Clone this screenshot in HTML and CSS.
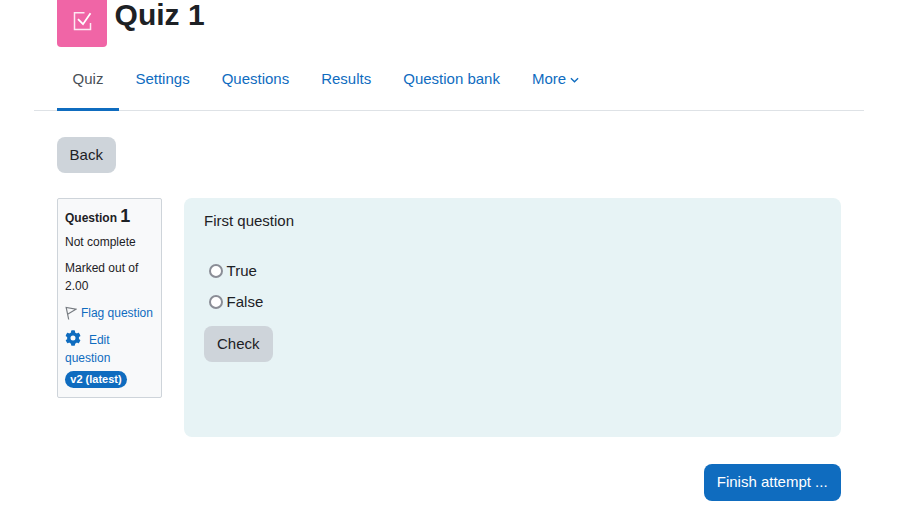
FILE: index.html
```html
<!DOCTYPE html>
<html lang="en">
  <head>
    <meta charset="UTF-8" />
    <title>Quiz 1</title>
    <link rel="stylesheet" href="styles.css" />
  </head>
  <body>
    <div class="page">
      <!-- HEADER -->
      <header class="page-header">
        <div class="activity-icon">
          <svg viewBox="0 0 24 24" width="24" height="24" fill="none" stroke="#fff">
            <path d="M14.500 2.800H4.500V19.500H20.500V13" stroke-width="1.500" opacity="0.85" />
            <path d="M8 9.200l5 5 7.500-11" stroke-width="1.800" />
          </svg>
        </div>
        <h1>Quiz 1</h1>
      </header>

      <!-- TABS -->
      <nav class="tabs">
        <a class="tab active" href="#">Quiz</a>
        <a class="tab" href="#">Settings</a>
        <a class="tab" href="#">Questions</a>
        <a class="tab" href="#">Results</a>
        <a class="tab" href="#">Question bank</a>
        <a class="tab" href="#">More
          <svg class="caret" viewBox="0 0 10 6" width="9" height="6" fill="none" stroke="#0f6cbf" stroke-width="1.5">
            <path d="M1 1l4 4 4-4" />
          </svg>
        </a>
      </nav>

      <main class="content">
        <button class="btn btn-secondary back">Back</button>

        <div class="question">
          <!-- QUESTION INFO -->
          <aside class="info">
            <h3 class="q-no">Question <span>1</span></h3>
            <p class="state">Not complete</p>
            <p class="grade">Marked out of 2.00</p>
            <a class="flag" href="#">
              <svg viewBox="0 0 12 14" width="12" height="14" fill="none" stroke="#767b80" stroke-width="1.2">
                <path d="M3.700 13.500L1.200 1.500 11 3.200 3 8" />
              </svg>
              Flag question
            </a>
            <a class="edit" href="#">
              <svg viewBox="0 0 512 512" width="16" height="16" fill="#0f6cbf">
                <path d="M487 316l-42-25c4-23 4-47 0-70l42-25c5-3 7-9 5-14-11-35-30-67-54-93-4-4-10-5-15-2l-42 24c-18-15-38-27-60-35V28c0-6-4-11-9-12-37-8-74-8-109 0-5 1-9 6-9 12v49c-22 8-42 20-60 35L92 88c-5-3-11-2-15 2-24 26-43 58-54 93-2 5 0 11 5 14l42 25c-4 23-4 47 0 70l-42 25c-5 3-7 9-5 14 11 35 30 67 54 93 4 4 10 5 15 2l42-24c18 15 38 27 60 35v49c0 6 4 11 9 12 37 8 74 8 109 0 5-1 9-6 9-12v-49c22-8 42-20 60-35l42 24c5 3 11 2 15-2 24-26 43-58 54-93 2-5 0-11-5-14zM256 336a80 80 0 1 1 0-160 80 80 0 0 1 0 160z" />
              </svg>
              <span class="edit-label">Edit question</span>
            </a>
            <span class="badge">v2 (latest)</span>
          </aside>

          <!-- QUESTION BODY -->
          <section class="formulation">
            <p class="q-text">First question</p>
            <label class="answer"><input type="radio" name="q1" /> True</label>
            <label class="answer"><input type="radio" name="q1" /> False</label>
            <button class="btn btn-secondary check">Check</button>
          </section>
        </div>

        <div class="actions">
          <button class="btn btn-primary">Finish attempt ...</button>
        </div>
      </main>
    </div>
  </body>
</html>
```

FILE: styles.css
```css
* {
  box-sizing: border-box;
}

:root {
  --blue: #0f6cbf;
  --dark: #1d2125;
}

html,
body {
  height: 100%;
  overflow: hidden;
}

body {
  margin: 0;
  color: var(--dark);
  background: #fff;
  font-family: "Liberation Sans", Arial, sans-serif;
  font-size: 15px;
  line-height: 22.5px;
}

a {
  color: var(--blue);
  text-decoration: none;
}

.page {
  margin: -3px 34.4px 0 33.6px;
}

/* HEADER */

.page-header {
  display: flex;
  gap: 8px;
  padding: 0 23px;
}

.activity-icon {
  display: flex;
  align-items: center;
  justify-content: center;
  width: 50px;
  height: 50px;
  background: #f065a6;
  border-radius: 0 0 4px 4px;
}

h1 {
  margin: 3px 0 0;
  font-size: 30px;
  line-height: 30px;
}

/* TABS */

.tabs {
  display: flex;
  height: 64px;
  padding: 0 23px;
  border-bottom: 1px solid #dee2e6;
}

.tab {
  height: 64px;
  padding: 21px 16px 0;
}

.tab.active {
  color: #495057;
  border-bottom: 3px solid var(--blue);
}

.caret {
  vertical-align: 1px;
}

/* BUTTONS */

.btn {
  display: block;
  padding: 7px 13px;
  border: 0;
  border-radius: 8px;
  font: inherit;
}

.btn-secondary {
  color: var(--dark);
  background: #ced4da;
}

.btn-primary {
  color: #fff;
  background: var(--blue);
}

/* CONTENT */

.content {
  padding: 25.6px 23px 0;
}

.question {
  display: flex;
  align-items: flex-start;
  gap: 22px;
  margin-top: 25px;
}

/* QUESTION INFO */

.info {
  width: 105px;
  height: 200px;
  padding: 7px 7px 7px 7.4px;
  flex: none;
  background: #f8f9fa;
  border: 1px solid #ced4da;
  border-radius: 2px;
  font-size: 12px;
  line-height: 18px;
}

.q-no {
  margin: 0 0 5px;
  font-size: 12px;
  line-height: 20px;
}

.q-no span {
  font-size: 18px;
}

.state,
.grade {
  margin: 0 0 8px;
}

.flag,
.edit {
  display: block;
}

.flag {
  margin-top: 9px;
}

.flag svg {
  vertical-align: -3px;
  margin-right: 0.6px;
}

.edit {
  margin-top: 8px;
}

.edit svg {
  vertical-align: -2px;
  margin-right: 4.6px;
}

.badge {
  display: inline-block;
  margin-top: 4px;
  padding: 0 5.3px;
  color: #fff;
  background: var(--blue);
  border-radius: 9px;
  font-size: 11px;
  font-weight: bold;
  line-height: 17px;
}

/* QUESTION BODY */

.formulation {
  flex: 1;
  height: 239px;
  padding: 12px 20.4px;
  background: #e7f3f5;
  border-radius: 8px;
}

.q-text {
  margin: 0 0 23px;
}

.answer {
  display: flex;
  align-items: center;
  height: 31px;
  gap: 3.6px;
  padding-left: 5px;
}

.answer input {
  appearance: none;
  width: 14px;
  height: 14px;
  margin: 0;
  background: #fff;
  border: 2px solid #8a8d96;
  border-radius: 50%;
}

.check {
  margin-top: 8px;
}

.actions {
  display: flex;
  justify-content: flex-end;
  margin-top: 27px;
}
```
